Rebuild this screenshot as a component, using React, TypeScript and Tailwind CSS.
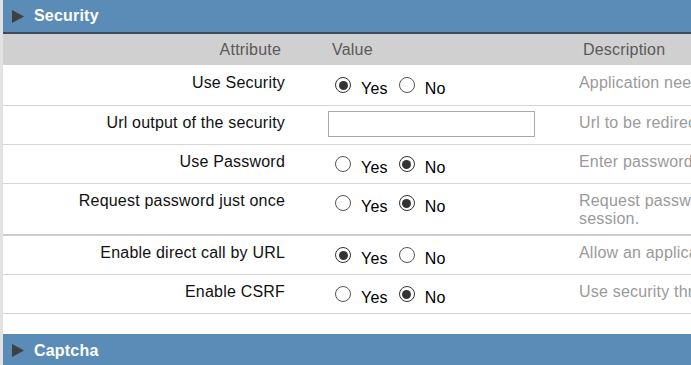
import React from "react";

type Row = {
  label: string;
  kind: "radio" | "text";
  value?: boolean;
  desc: string;
  tall?: boolean;
};

const rows: Row[] = [
  { label: "Use Security", kind: "radio", value: true, desc: "Application needs to be secured." },
  { label: "Url output of the security", kind: "text", desc: "Url to be redirected on error." },
  { label: "Use Password", kind: "radio", value: false, desc: "Enter password to access." },
  {
    label: "Request password just once",
    kind: "radio",
    value: false,
    desc: "Request password just once per session.",
    tall: true,
  },
  { label: "Enable direct call by URL", kind: "radio", value: true, desc: "Allow an application call by URL." },
  { label: "Enable CSRF", kind: "radio", value: false, desc: "Use security through token." },
];

function SectionHeader({ title, border }: { title: string; border?: boolean }) {
  return (
    <div
      className={`flex h-[33px] items-center bg-[#5a8cb7] ${border ? "border-b-2 border-[#3b4b5b] h-[34px]" : ""}`}
    >
      <svg width="12" height="13" viewBox="0 0 12 13" className="ml-[9px]">
        <polygon points="0,0 12,6.5 0,13" fill="#404040" />
      </svg>
      <span className="ml-[10px] font-bold text-white">{title}</span>
    </div>
  );
}

function Radio({ checked }: { checked: boolean }) {
  return (
    <span
      className={`mb-[5px] flex h-[16px] w-[16px] items-center justify-center rounded-full border bg-white ${
        checked ? "border-[#333] border-[1.5px]" : "border-[#555]"
      }`}
    >
      {checked && <span className="h-[9px] w-[9px] rounded-full bg-[#333]" />}
    </span>
  );
}

function YesNo({ value }: { value: boolean }) {
  return (
    <div className="flex items-end pt-[11px] pl-[35px]">
      <Radio checked={value} />
      <span className="ml-[10px] text-black">Yes</span>
      <span className="ml-[11px]">
        <Radio checked={!value} />
      </span>
      <span className="ml-[10px] text-black">No</span>
    </div>
  );
}

export default function App() {
  return (
    <div className="h-[365px] w-[691px] overflow-hidden border-l-[3px] border-[#e2e2e2] bg-white font-['Liberation_Sans',Arial,sans-serif] text-[16px] leading-[18px] tracking-[0.2px]">
      <div className="w-[1000px]">
        <SectionHeader title="Security" border />

        <div className="flex h-[32px] items-center border-b border-white bg-[#d0d0d0] text-[#5a5a5a]">
          <div className="w-[297px] pr-[19px] text-right">Attribute</div>
          <div className="w-[251px] pl-[32px]">Value</div>
          <div className="pl-[32px]">Description</div>
        </div>

        {rows.map((row, i) => (
          <div
            key={row.label}
            className={`flex ${
              row.tall
                ? "h-[52px] border-b-2 border-[#cccccc]"
                : `${i === 0 ? "h-[40px]" : "h-[39px]"} border-b border-[#d6d6d6]`
            }`}
          >
            <div className="w-[297px] shrink-0 pt-[8px] pr-[15px] text-right text-[#111]">{row.label}</div>
            <div className="w-[251px] shrink-0">
              {row.kind === "radio" ? (
                <YesNo value={!!row.value} />
              ) : (
                <div className="pt-[5px] pl-[28px]">
                  <input
                    type="text"
                    className="h-[26px] w-[207px] border border-[#a9a9a9] bg-white outline-none"
                  />
                </div>
              )}
            </div>
            <div
              className={`w-[290px] shrink-0 pt-[8px] pl-[28px] text-[#9a9a9a] ${
                row.tall ? "" : "whitespace-nowrap"
              }`}
            >
              {row.desc}
            </div>
          </div>
        ))}

        <div className="h-[20px]" />

        <SectionHeader title="Captcha" />
      </div>
    </div>
  );
}
